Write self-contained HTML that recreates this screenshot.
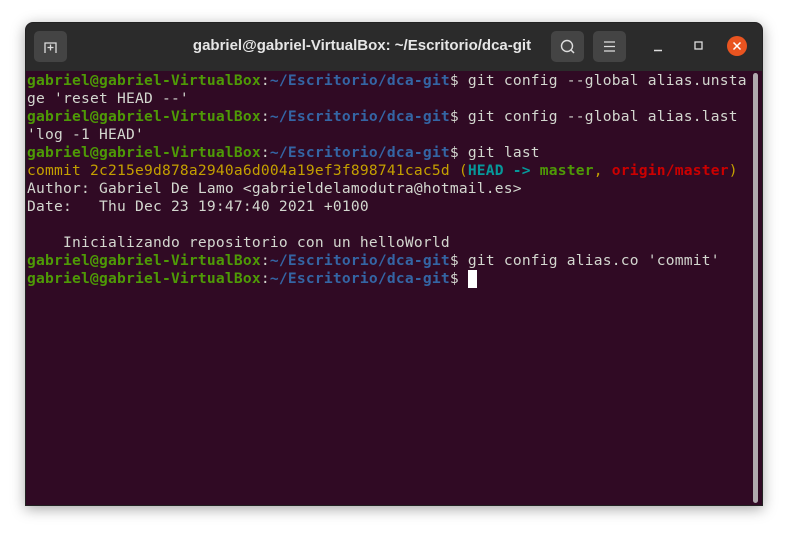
<!DOCTYPE html>
<html><head><meta charset="utf-8"><style>
html,body{margin:0;padding:0;width:786px;height:533px;background:#fff;overflow:hidden}
.win{position:absolute;left:25px;top:22px;width:736px;height:482px;background:#300a24;border-radius:8px 8px 0 0;box-shadow:0 3px 14px rgba(0,0,0,.35);overflow:hidden;border:1px solid #222}
.tb{position:absolute;left:0;top:0;width:736px;height:48px;background:#2b2b2b}
.btn{position:absolute;top:8px;width:33px;height:31px;background:#444;border-radius:5px}
.title{position:absolute;left:136px;width:400px;top:14px;text-align:center;color:#e6e6e6;font:bold 15px "Liberation Sans",sans-serif}
.term{position:absolute;left:1px;top:49px;font-family:"DejaVu Sans Mono","Liberation Mono",monospace;font-size:14.6px;line-height:18px;color:#d3d7cf;white-space:pre;letter-spacing:0.21px}
.g{color:#4e9a06;font-weight:bold}.b{color:#3465a4;font-weight:bold}.y{color:#c4a000}.c{color:#06989a;font-weight:bold}.r{color:#cc0000;font-weight:bold}.gn{color:#4e9a06;font-weight:bold}
.sb{position:absolute;left:727px;top:50px;width:5px;height:430px;background:#b0aaae;border-radius:3px}
.cur{display:inline-block;width:9px;height:18px;background:#fff;vertical-align:top}
</style></head><body>
<div class="win">
<div class="tb">
<div class="btn" style="left:8px"><svg width="33" height="31"><path d="M11 22V12h11v10M13.5 16.5h6M16.5 13.5v6" stroke="#ddd" stroke-width="1.3" fill="none"/></svg></div>
<div class="title">gabriel@gabriel-VirtualBox: ~/Escritorio/dca-git</div>
<div class="btn" style="left:525px"><svg width="33" height="31"><circle cx="16" cy="15" r="5.5" stroke="#ddd" stroke-width="1.4" fill="none"/><path d="M20 19l3 3" stroke="#ddd" stroke-width="1.5"/></svg></div>
<div class="btn" style="left:567px"><svg width="33" height="31"><path d="M11 11h11M11 15.5h11M11 20h11" stroke="#ddd" stroke-width="1.2"/></svg></div>
<svg style="position:absolute;left:610px;top:10px" width="126" height="28"><path d="M18 17.5h8" stroke="#ddd" stroke-width="1.4"/><rect x="59" y="9" width="7" height="7" stroke="#ddd" stroke-width="1.3" fill="none"/><circle cx="101" cy="13" r="10" fill="#e95420"/><path d="M97.5 9.5l7 7M104.5 9.5l-7 7" stroke="#fff" stroke-width="1.5"/></svg>
</div>
<div class="term"><span class="g">gabriel@gabriel-VirtualBox</span>:<span class="b">~/Escritorio/dca-git</span>$ git config --global alias.unsta
ge 'reset HEAD --'
<span class="g">gabriel@gabriel-VirtualBox</span>:<span class="b">~/Escritorio/dca-git</span>$ git config --global alias.last
'log -1 HEAD'
<span class="g">gabriel@gabriel-VirtualBox</span>:<span class="b">~/Escritorio/dca-git</span>$ git last
<span class="y">commit 2c215e9d878a2940a6d004a19ef3f898741cac5d (</span><span class="c">HEAD -&gt; </span><span class="gn">master</span><span class="y">, </span><span class="r">origin/master</span><span class="y">)</span>
Author: Gabriel De Lamo &lt;gabrieldelamodutra@hotmail.es&gt;
Date:   Thu Dec 23 19:47:40 2021 +0100

    Inicializando repositorio con un helloWorld
<span class="g">gabriel@gabriel-VirtualBox</span>:<span class="b">~/Escritorio/dca-git</span>$ git config alias.co 'commit'
<span class="g">gabriel@gabriel-VirtualBox</span>:<span class="b">~/Escritorio/dca-git</span>$ <span class="cur"></span></div>
<div class="sb"></div>
</div>
</body></html>
